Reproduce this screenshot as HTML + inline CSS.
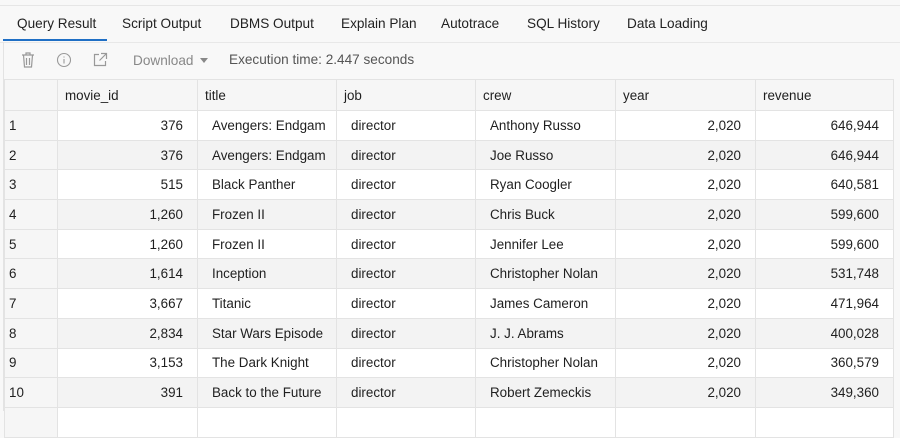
<!DOCTYPE html>
<html><head><meta charset="utf-8"><style>
*{margin:0;padding:0;box-sizing:border-box}
body{width:900px;height:411px;overflow:hidden;background:#f8f8f8;font-family:"Liberation Sans",Arial,sans-serif;font-size:13.4px;color:#1f1f1f;position:relative}
.topline{position:absolute;left:0;top:5px;width:900px;height:1px;background:#e6e6e6}
.tab{position:absolute;top:16px;font-size:13.6px;color:#222}
.ul{position:absolute;left:3px;top:39px;width:104px;height:2px;background:#1f6fc5}
.tbline{position:absolute;left:0;top:42px;width:900px;height:1px;background:#e8e8e8}
.lb{position:absolute;left:3px;top:42px;width:1px;height:369px;background:#e3e3e3}
.tool{position:absolute;top:52px;color:#888;font-size:13.6px}
table{position:absolute;left:4px;top:79px;border-collapse:collapse;table-layout:fixed;width:889px}
td,th{height:29.7px;border:1px solid #e3e3e3;font-weight:normal;white-space:nowrap;overflow:hidden;padding:0 14px}
th{text-align:left;padding-left:7px;background:#f6f6f6;height:31px}
td.n{background:#f6f6f6;padding-left:4px}
tr:nth-child(odd) td:not(.n){background:#f3f3f3}
tr:nth-child(even) td:not(.n){background:#fff}
td.r{text-align:right}
</style></head><body>
<div class="topline"></div>
<div class="tab" style="left:17px">Query Result</div>
<div class="tab" style="left:122px">Script Output</div>
<div class="tab" style="left:230px">DBMS Output</div>
<div class="tab" style="left:341px">Explain Plan</div>
<div class="tab" style="left:441px">Autotrace</div>
<div class="tab" style="left:527px">SQL History</div>
<div class="tab" style="left:627px">Data Loading</div>
<div class="ul"></div>
<div class="tbline"></div>
<svg style="position:absolute;left:20px;top:51px" width="16" height="18" viewBox="0 0 16 18" fill="none" stroke="#999" stroke-width="1.2"><path d="M2 4h12M6 4V2h4v2M3.5 4l1 12h7l1-12M6.5 7v7M9.5 7v7"/></svg>
<svg style="position:absolute;left:56px;top:52px" width="16" height="16" viewBox="0 0 16 16" fill="none" stroke="#999" stroke-width="1.1"><circle cx="8" cy="8" r="6.5"/><path d="M8 7v4.5M8 4.5v1"/></svg>
<svg style="position:absolute;left:92px;top:52px" width="16" height="16" viewBox="0 0 16 16" fill="none" stroke="#999" stroke-width="1.2"><path d="M7 2.5H2.5v11h11V9M9 1.5h5.5V7M14.5 1.5 7.5 8.5"/></svg>
<div class="tool" style="left:133px;top:53px">Download</div>
<div style="position:absolute;left:200px;top:58px;width:0;height:0;border-left:4.5px solid transparent;border-right:4.5px solid transparent;border-top:5px solid #888"></div>
<div class="tool" style="left:229px;color:#555">Execution time: 2.447 seconds</div>
<div class="lb"></div>
<table>
<colgroup><col style="width:53px"><col style="width:140px"><col style="width:139px"><col style="width:139px"><col style="width:140px"><col style="width:140px"><col style="width:138px"></colgroup>
<tr><th></th><th>movie_id</th><th>title</th><th>job</th><th>crew</th><th>year</th><th>revenue</th></tr>
<tr><td class="n">1</td><td class="r">376</td><td>Avengers: Endgam</td><td>director</td><td>Anthony Russo</td><td class="r">2,020</td><td class="r">646,944</td></tr>
<tr><td class="n">2</td><td class="r">376</td><td>Avengers: Endgam</td><td>director</td><td>Joe Russo</td><td class="r">2,020</td><td class="r">646,944</td></tr>
<tr><td class="n">3</td><td class="r">515</td><td>Black Panther</td><td>director</td><td>Ryan Coogler</td><td class="r">2,020</td><td class="r">640,581</td></tr>
<tr><td class="n">4</td><td class="r">1,260</td><td>Frozen II</td><td>director</td><td>Chris Buck</td><td class="r">2,020</td><td class="r">599,600</td></tr>
<tr><td class="n">5</td><td class="r">1,260</td><td>Frozen II</td><td>director</td><td>Jennifer Lee</td><td class="r">2,020</td><td class="r">599,600</td></tr>
<tr><td class="n">6</td><td class="r">1,614</td><td>Inception</td><td>director</td><td>Christopher Nolan</td><td class="r">2,020</td><td class="r">531,748</td></tr>
<tr><td class="n">7</td><td class="r">3,667</td><td>Titanic</td><td>director</td><td>James Cameron</td><td class="r">2,020</td><td class="r">471,964</td></tr>
<tr><td class="n">8</td><td class="r">2,834</td><td>Star Wars Episode</td><td>director</td><td>J. J. Abrams</td><td class="r">2,020</td><td class="r">400,028</td></tr>
<tr><td class="n">9</td><td class="r">3,153</td><td>The Dark Knight</td><td>director</td><td>Christopher Nolan</td><td class="r">2,020</td><td class="r">360,579</td></tr>
<tr><td class="n">10</td><td class="r">391</td><td>Back to the Future</td><td>director</td><td>Robert Zemeckis</td><td class="r">2,020</td><td class="r">349,360</td></tr>
<tr><td class="n"></td><td></td><td></td><td></td><td></td><td></td><td></td></tr>
</table>
</body></html>
